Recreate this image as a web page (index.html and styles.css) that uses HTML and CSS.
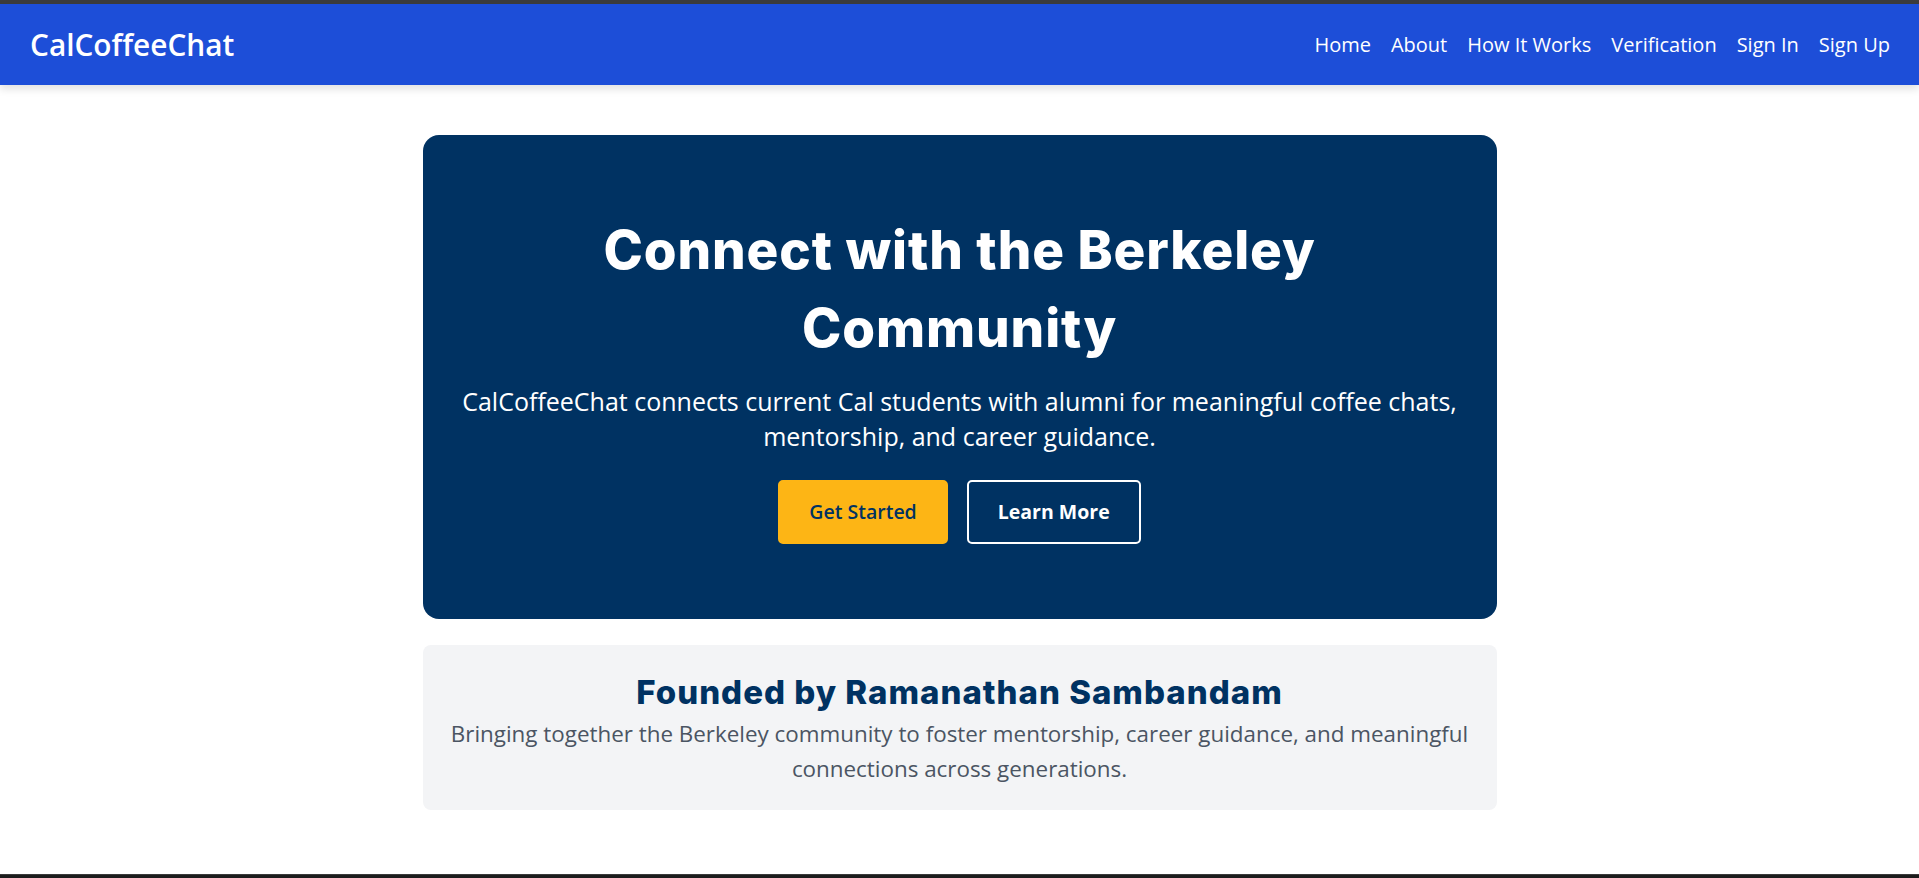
FILE: index.html
```html
<!DOCTYPE html>
<html lang="en">
<head>
<meta charset="utf-8">
<title>CalCoffeeChat</title>
<link rel="stylesheet" href="styles.css">
</head>
<body>
<div class="top-strip"></div>
<nav class="navbar">
  <a class="brand" href="#">CalCoffeeChat</a>
  <ul class="nav-links">
    <li><a href="#">Home</a></li>
    <li><a href="#">About</a></li>
    <li><a href="#">How It Works</a></li>
    <li><a href="#">Verification</a></li>
    <li><a href="#">Sign In</a></li>
    <li><a href="#">Sign Up</a></li>
  </ul>
</nav>
<main class="main">
  <section class="hero">
    <h1 class="hero-title">Connect with the Berkeley Community</h1>
    <p class="hero-text">CalCoffeeChat connects current Cal students with alumni for meaningful coffee chats, mentorship, and career guidance.</p>
    <div class="hero-actions">
      <a class="btn btn-gold" href="#">Get Started</a>
      <a class="btn btn-outline" href="#">Learn More</a>
    </div>
  </section>
  <section class="founder">
    <h2 class="founder-title">Founded by Ramanathan Sambandam</h2>
    <p class="founder-text">Bringing together the Berkeley community to foster mentorship, career guidance, and meaningful connections across generations.</p>
  </section>
</main>
<footer class="footer"></footer>
</body>
</html>
```

FILE: styles.css
```css
* { box-sizing: border-box; }
html, body { margin: 0; padding: 0; }
body {
  font-family: "Open Sans", "Liberation Sans", sans-serif;
  background: #ffffff;
  color: #111827;
}
a { text-decoration: none; color: inherit; }

.top-strip {
  height: 4px;
  background: #3c3c3c;
}

.navbar {
  height: 81px;
  background: #1d4ed8;
  display: flex;
  align-items: center;
  justify-content: space-between;
  padding: 0 29px 0 30px;
  box-shadow: 0 4px 8px rgba(0, 0, 0, 0.12);
  position: relative;
  z-index: 1;
}
.brand {
  color: #ffffff;
  font-size: 29.8px;
  font-weight: 600;
}
.nav-links {
  list-style: none;
  display: flex;
  gap: 20px;
  margin: 0;
  padding: 0;
}
.nav-links a {
  color: #ffffff;
  font-size: 20px;
  font-weight: 400;
}

.main {
  padding: 50px 0 64px;
}

.hero {
  width: 1074px;
  margin: 0 auto;
  background: #003262;
  border-radius: 16px;
  padding: 76px 30px 75px;
  text-align: center;
  color: #ffffff;
}
.hero-title {
  margin: 0;
  font-family: "Inter", "Open Sans", sans-serif;
  font-weight: 800;
  font-size: 53px;
  line-height: 78px;
  letter-spacing: 0.9px;
  padding: 0 100px;
}
.hero-text {
  margin: 17px 0 26px;
  font-size: 25px;
  line-height: 35px;
}
.hero-actions {
  display: flex;
  justify-content: center;
  gap: 19px;
}
.btn {
  display: inline-block;
  font-size: 19.5px;
  line-height: 28px;
  font-weight: 600;
  padding: 16px 29px;
  border: 2px solid transparent;
  border-radius: 5px;
}
.btn-gold {
  background: #fdb515;
  border-color: #fdb515;
  color: #003262;
}
.btn-outline {
  border-color: #ffffff;
  color: #ffffff;
  font-weight: 700;
}

.founder {
  width: 1074px;
  margin: 26px auto 0;
  background: #f3f4f6;
  border-radius: 8px;
  padding: 23px 24px 24px;
  text-align: center;
}
.founder-title {
  margin: 0;
  font-family: "Inter", "Open Sans", sans-serif;
  font-weight: 800;
  font-size: 33px;
  line-height: 48px;
  letter-spacing: 1px;
  color: #003262;
}
.founder-text {
  margin: 0;
  font-size: 22.4px;
  line-height: 35px;
  color: #4b5563;
}

.footer {
  background: #1c1c1c;
  border-top: 1px solid #3a3a3a;
  height: 80px;
}
```
